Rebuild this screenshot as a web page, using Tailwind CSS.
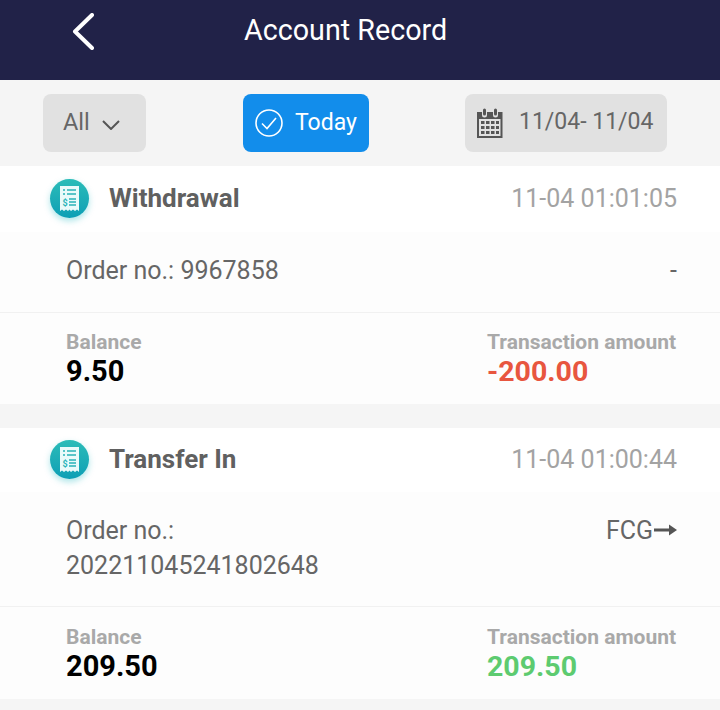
<!DOCTYPE html>
<html lang="en">

<head>
    <meta charset="UTF-8">
    <meta name="viewport" content="width=device-width, initial-scale=1.0">
    <title>Account Record</title>
    <script src="https://cdn.jsdelivr.net/npm/@tailwindcss/browser@4"></script>
</head>

<body class="bg-[#f5f5f5] font-['Roboto',sans-serif] w-[720px] h-[710px] overflow-hidden">
    <header class="bg-[#212248] h-20 flex items-start text-white">
        <div class="w-[244px] pl-[72px] pt-[13px] shrink-0">
            <svg width="22" height="37" viewBox="0 0 22 37" fill="none" stroke="#fff" stroke-width="4" stroke-linecap="round" stroke-linejoin="round">
                <path d="M20 2 L3 18.5 L20 35" />
            </svg>
        </div>
        <h1 class="text-[28.7px] leading-[32px] pt-[14px] h-[46px]">Account Record</h1>
    </header>

    <section class="h-[86px] pt-[14px] pl-[43px] flex items-start">
        <div class="w-[103px] h-[58px] rounded-[8px] bg-[#e1e1e1] text-[#666] flex items-center pl-5 gap-[12px]">
            <span class="text-[23.500px] -mt-[1px]">All</span>
            <svg width="18" height="10" viewBox="0 0 18 10" fill="none" stroke="#555" stroke-width="2" class="mt-[3px]">
                <path d="M1 1 L9 9 L17 1" />
            </svg>
        </div>
        <div class="ml-[97px] w-[126px] h-[58px] rounded-[8px] bg-[#128deb] text-white flex items-center pl-3 gap-3">
            <svg width="28" height="28" viewBox="0 0 28 28" fill="none" stroke="#fff" stroke-width="1.6">
                <circle cx="14" cy="14" r="13" />
                <path d="M7 14.500 L12 19.500 L21 9" />
            </svg>
            <span class="text-[23px]">Today</span>
        </div>
        <div class="ml-[96px] w-[202px] h-[58px] rounded-[8px] bg-[#e1e1e1] text-[#666] flex items-center pl-[11px] gap-[16px]">
            <svg width="27" height="30" viewBox="0 0 27 30" fill="#555">
                <path d="M1 4 H6 V7 A2.5 2.5 0 0 0 11 7 V4 H17 V7 A2.5 2.5 0 0 0 22 7 V4 H26.500 V30 H1 Z M3 11 V28 H24.500 V11 Z" />
                <rect x="7" y="0.500" width="3" height="7" rx="1.500" />
                <rect x="18" y="0.500" width="3" height="7" rx="1.500" />
                <path d="M5 13 h3.500 v3 h-3.500z M10 13 h3.500 v3 h-3.500z M15 13 h3.500 v3 h-3.500z M20 13 h3 v3 h-3z M5 18 h3.500 v3 h-3.500z M10 18 h3.500 v3 h-3.500z M15 18 h3.500 v3 h-3.500z M20 18 h3 v3 h-3z M5 23 h3.500 v3 h-3.500z M10 23 h3.500 v3 h-3.500z M15 23 h3.500 v3 h-3.500z M20 23 h3 v3 h-3z" />
            </svg>
            <span class="text-[23px] -mt-[1px] whitespace-nowrap">11/04- 11/04</span>
        </div>
    </section>

    <!-- first record -->
    <article class="bg-[#fdfdfd]">
        <div class="bg-white h-[66px] pl-[50px] pr-[43px] flex items-center justify-between">
            <div class="flex items-center gap-5 -mt-[1px]">
                <div class="w-[39px] h-[39px] rounded-full bg-gradient-to-b from-[#2bbcb8] to-[#0c9fb5] shadow-[0_3px_6px_rgba(20,180,190,0.35)] flex items-center justify-center">
                    <svg width="19" height="25" viewBox="0 0 19 25">
                        <path fill="#eafafa" d="M0 0 H19 V25 L17 23.500 L15 25 L13 23.500 L11 25 L9.500 23.500 L8 25 L6 23.500 L4 25 L2 23.500 L0 25 Z" />
                        <path stroke="#2ab3b8" stroke-width="1.300" d="M3 4 H5 M7 4 H16 M3 8 H5 M7 8 H16 M9 13 H16 M9 16 H16 M9 19 H16" />
                        <text x="2.500" y="19.500" font-size="9" font-weight="700" fill="#2ab3b8" font-family="Roboto">$</text>
                    </svg>
                </div>
                <h2 class="text-[26px] font-bold text-[#606060]">Withdrawal</h2>
            </div>
            <span class="text-[25px] text-[#a3a3a3]">11-04 01:01:05</span>
        </div>
        <div class="h-[81px] pl-[66px] pr-[43px] flex justify-between pt-[21px] text-[25px] leading-[35px] text-[#666] border-b border-[#f1f1f1]">
            <span>Order no.: 9967858</span>
            <span>-</span>
        </div>
        <div class="h-[91px] pl-[66px] pr-[43px] flex justify-between pt-[17px]">
            <div>
                <p class="text-[21px] leading-[25px] font-bold text-[#a9a9a9]">Balance</p>
                <p class="text-[29px] leading-[33px] font-bold text-black">9.50</p>
            </div>
            <div class="w-[190px]">
                <p class="text-[21px] leading-[25px] font-bold text-[#a9a9a9] whitespace-nowrap">Transaction amount</p>
                <p class="text-[28.5px] leading-[33px] font-bold text-[#e8563f]">-200.00</p>
            </div>
        </div>
    </article>

    <!-- second record -->
    <article class="bg-[#fdfdfd] mt-6">
        <div class="bg-white h-[64px] pl-[50px] pr-[43px] flex items-center justify-between">
            <div class="flex items-center gap-5 mt-[-1px]">
                <div class="w-[39px] h-[39px] rounded-full bg-gradient-to-b from-[#2bbcb8] to-[#0c9fb5] shadow-[0_3px_6px_rgba(20,180,190,0.35)] flex items-center justify-center">
                    <svg width="19" height="25" viewBox="0 0 19 25">
                        <path fill="#eafafa" d="M0 0 H19 V25 L17 23.500 L15 25 L13 23.500 L11 25 L9.500 23.500 L8 25 L6 23.500 L4 25 L2 23.500 L0 25 Z" />
                        <path stroke="#2ab3b8" stroke-width="1.300" d="M3 4 H5 M7 4 H16 M3 8 H5 M7 8 H16 M9 13 H16 M9 16 H16 M9 19 H16" />
                        <text x="2.500" y="19.500" font-size="9" font-weight="700" fill="#2ab3b8" font-family="Roboto">$</text>
                    </svg>
                </div>
                <h2 class="text-[26px] font-bold text-[#606060]">Transfer In</h2>
            </div>
            <span class="text-[25px] text-[#a3a3a3]">11-04 01:00:44</span>
        </div>
        <div class="h-[115px] pl-[66px] pr-[43px] flex justify-between pt-[21px] text-[25px] leading-[35px] text-[#666] border-b border-[#f1f1f1]">
            <span>Order no.:<br>202211045241802648</span>
            <span class="flex items-center h-[35px] gap-[1px]">FCG
                <svg width="23" height="14" viewBox="0 0 23 14" fill="#555" class="-mt-[1px]">
                    <path d="M0 5.500 H15 V1.500 L23 7 L15 12.500 V8.500 H0 Z" />
                </svg>
            </span>
        </div>
        <div class="h-[92px] pl-[66px] pr-[43px] flex justify-between pt-[18px]">
            <div>
                <p class="text-[21px] leading-[25px] font-bold text-[#a9a9a9]">Balance</p>
                <p class="text-[29px] leading-[33px] font-bold text-black">209.50</p>
            </div>
            <div class="w-[190px]">
                <p class="text-[21px] leading-[25px] font-bold text-[#a9a9a9] whitespace-nowrap">Transaction amount</p>
                <p class="text-[28.5px] leading-[33px] font-bold text-[#5dcb70]">209.50</p>
            </div>
        </div>
    </article>
</body>

</html>
